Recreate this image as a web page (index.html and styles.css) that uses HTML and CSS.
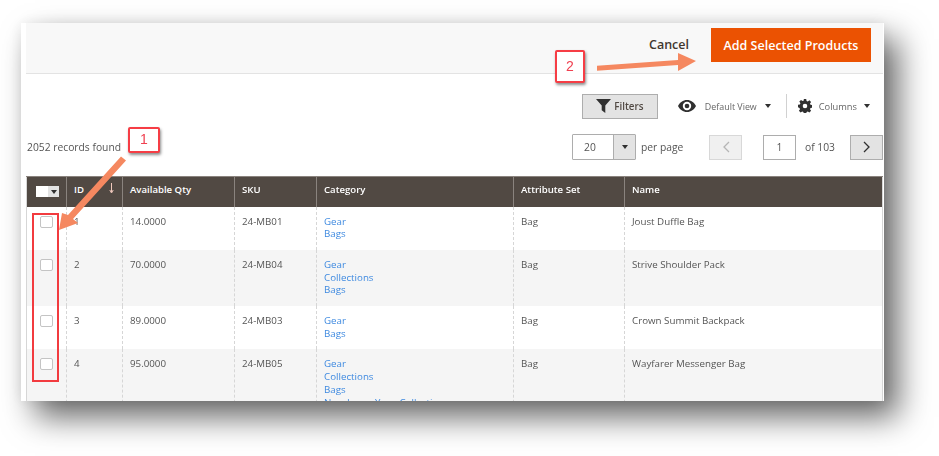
FILE: index.html
```html
<!DOCTYPE html>
<html lang="en">
<head>
    <meta charset="UTF-8">
    <title>Add Products</title>
    <link rel="stylesheet" href="styles.css">
</head>
<body>
<div class="stage">
    <div class="shot">
        <div class="page-header">
            <a class="cancel">Cancel</a>
            <button class="primary">Add Selected Products</button>
        </div>

        <div class="toolbar">
            <button class="filters">
                <svg width="15" height="14" viewBox="0 0 15 14"><path d="M0 0h15L9.300 6.500V14L5.700 11.200V6.500z" fill="#303030"/></svg>
                Filters
            </button>
            <div class="view">
                <svg width="18" height="12" viewBox="0 0 18 12"><path d="M9 0C5 0 1.800 2.400 0 6c1.800 3.600 5 6 9 6s7.200-2.400 9-6c-1.800-3.600-5-6-9-6zm0 1.800a4.200 4.200 0 1 1 0 8.400 4.200 4.200 0 0 1 0-8.400z" fill="#303030"/><circle cx="9" cy="6" r="2.300" fill="#303030"/></svg>
                <span>Default View</span>
                <i class="caret"></i>
            </div>
            <div class="columns">
                <svg width="14" height="14" viewBox="0 0 14 14"><path fill-rule="evenodd" fill="#303030" d="M5.800 0h2.400l.4 1.900 1.200.5 1.600-1.100 1.700 1.700-1.100 1.600.5 1.200 1.900.4v2.400l-1.900.4-.5 1.200 1.100 1.600-1.700 1.700-1.600-1.100-1.200.5-.4 1.900H5.800l-.4-1.900-1.200-.5-1.600 1.100-1.700-1.700 1.100-1.600-.5-1.200L0 8.200V5.800l1.900-.4.5-1.200L1.300 2.600 3 .9l1.600 1.100 1.200-.5zM7 4.700a2.300 2.300 0 1 0 0 4.600 2.300 2.300 0 0 0 0-4.600z"/></svg>
                <span>Columns</span>
                <i class="caret"></i>
            </div>
        </div>

        <div class="pager-row">
            <div class="records">2052 records found</div>
            <div class="pager">
                <div class="per-page-select">
                    <span class="value">20</span>
                    <span class="toggle"><i class="caret"></i></span>
                </div>
                <span class="per-page">per page</span>
                <button class="page-btn prev">
                    <svg width="8" height="12" viewBox="0 0 8 12"><path d="M7 1L2 6l5 5" fill="none" stroke="#b5b5b5" stroke-width="1.300"/></svg>
                </button>
                <span class="page-input">1</span>
                <span class="of-pages">of 103</span>
                <button class="page-btn next">
                    <svg width="8" height="12" viewBox="0 0 8 12"><path d="M1 1l5 5-5 5" fill="none" stroke="#303030" stroke-width="1.300"/></svg>
                </button>
            </div>
        </div>

        <table class="grid">
            <colgroup>
                <col class="c-check"><col class="c-id"><col class="c-qty"><col class="c-sku"><col class="c-cat"><col class="c-set"><col>
            </colgroup>
            <thead>
                <tr>
                    <th class="mass"><span class="mass-box"></span><span class="mass-toggle"><i class="caret small"></i></span></th>
                    <th class="sorted">ID
                        <svg class="sort" width="5" height="11" viewBox="0 0 5 11"><path d="M2.500 0v9M.8 7l1.700 3 1.700-3" fill="none" stroke="#f0c8bc" stroke-width="1"/></svg>
                    </th>
                    <th>Available Qty</th>
                    <th>SKU</th>
                    <th>Category</th>
                    <th>Attribute Set</th>
                    <th>Name</th>
                </tr>
            </thead>
            <tbody>
                <tr>
                    <td><span class="check"></span></td>
                    <td>1</td><td>14.0000</td><td>24-MB01</td>
                    <td><a>Gear</a><a>Bags</a></td>
                    <td>Bag</td><td>Joust Duffle Bag</td>
                </tr>
                <tr>
                    <td><span class="check"></span></td>
                    <td>2</td><td>70.0000</td><td>24-MB04</td>
                    <td><a>Gear</a><a>Collections</a><a>Bags</a></td>
                    <td>Bag</td><td>Strive Shoulder Pack</td>
                </tr>
                <tr>
                    <td><span class="check"></span></td>
                    <td>3</td><td>89.0000</td><td>24-MB03</td>
                    <td><a>Gear</a><a>Bags</a></td>
                    <td>Bag</td><td>Crown Summit Backpack</td>
                </tr>
                <tr>
                    <td><span class="check"></span></td>
                    <td>4</td><td>95.0000</td><td>24-MB05</td>
                    <td><a>Gear</a><a>Collections</a><a>Bags</a><a>New Luma Yoga Collection</a></td>
                    <td>Bag</td><td>Wayfarer Messenger Bag</td>
                </tr>
            </tbody>
        </table>
    </div>

    <!-- annotations drawn over the screenshot -->
    <div class="mark-rows"></div>
    <svg class="arrows" width="939" height="456" viewBox="0 0 939 456">
        <path d="M121 156.500L126 160.500 73 219 78 223 59 230 62 213 68 215z" fill="#f58860"/>
        <path d="M597 65.800L678 60V53L696 61 678 71V65L597 70.800z" fill="#f58860"/>
    </svg>
    <div class="callout one">1</div>
    <div class="callout two">2</div>
</div>
</body>
</html>
```

FILE: styles.css
```css
html, body {
    margin: 0;
    padding: 0;
    background-color: #fff;
}
.stage {
    position: relative;
    width: 939px;
    height: 456px;
    overflow: hidden;
    font-family: "Open Sans", sans-serif;
    font-size: 9.750px;
    color: #4f4f4f;
    filter: blur(0.4px);
}
.shot {
    box-sizing: border-box;
    width: 863px;
    height: 378px;
    margin: 23px 0 0 21px;
    padding: 0 1px 0 5px;
    overflow: hidden;
    background-color: #fff;
    box-shadow: 14px 16px 30px rgba(0, 0, 0, 0.6), 0 0 14px rgba(0, 0, 0, 0.08);
}
button {
    font-family: inherit;
    cursor: pointer;
}
.caret {
    display: inline-block;
    width: 0;
    height: 0;
    border-left: 3.500px solid transparent;
    border-right: 3.500px solid transparent;
    border-top: 4px solid #303030;
}
.caret.small {
    border-left-width: 3px;
    border-right-width: 3px;
    border-top-width: 4px;
}

/* header */
.page-header {
    display: flex;
    justify-content: flex-end;
    align-items: flex-start;
    height: 50px;
    padding-right: 12px;
    background-color: #f8f8f8;
    border-bottom: 1px solid #e3e3e3;
}
.cancel {
    margin: 14px 22px 0 0;
    font-size: 12.500px;
    font-weight: 600;
    line-height: 16px;
    color: #41362f;
}
.primary {
    width: 160px;
    height: 34px;
    margin-top: 5px;
    padding: 0;
    border: none;
    background-color: #eb5202;
    color: #fff;
    font-size: 12.500px;
    font-weight: 600;
}

/* filters and view row */
.toolbar {
    display: flex;
    justify-content: flex-end;
    align-items: center;
    height: 24px;
    margin-top: 20px;
    padding-right: 13px;
}
.filters {
    display: flex;
    align-items: center;
    justify-content: center;
    gap: 3px;
    box-sizing: border-box;
    width: 76px;
    height: 25px;
    padding: 0;
    background-color: #e3e3e3;
    border: 1px solid #adadad;
    color: #514943;
    font-size: 9.800px;
    font-weight: 600;
}
.view {
    display: flex;
    align-items: center;
    height: 24px;
    margin-left: 20px;
    padding-right: 15px;
    border-right: 1px solid #d1d1d1;
    color: #666;
    font-size: 8.900px;
}
.view span {
    margin: 0 8px 0 9px;
}
.columns {
    display: flex;
    align-items: center;
    margin-left: 11px;
    color: #666;
    font-size: 9.300px;
}
.columns span {
    margin: 0 7px 0 7px;
}

/* pager row */
.pager-row {
    display: flex;
    justify-content: space-between;
    align-items: center;
    height: 26px;
    margin-top: 16px;
}
.records {
    padding-left: 1px;
    font-size: 10.300px;
    color: #555;
}
.pager {
    display: flex;
    align-items: center;
    color: #555;
    font-size: 10.300px;
}
.per-page-select {
    display: flex;
    box-sizing: border-box;
    width: 64px;
    height: 26px;
    background-color: #fff;
    border: 1px solid #adadad;
    border-radius: 1px;
}
.value {
    width: 40px;
    padding-left: 11px;
    box-sizing: border-box;
    line-height: 24px;
}
.toggle {
    display: flex;
    align-items: center;
    justify-content: center;
    flex: 1;
    background-color: #e3e3e3;
    border-left: 1px solid #adadad;
}
.per-page {
    width: 68px;
    margin-left: 5px;
}
.page-btn {
    display: flex;
    align-items: center;
    justify-content: center;
    box-sizing: border-box;
    width: 33px;
    height: 25px;
    padding: 0;
    background-color: #e3e3e3;
    border: 1px solid #adadad;
}
.page-btn.prev {
    background-color: #f0f0f0;
    border-color: #d8d8d8;
}
.page-input {
    box-sizing: border-box;
    width: 33px;
    height: 25px;
    margin-left: 21px;
    border: 1px solid #adadad;
    text-align: center;
    line-height: 23px;
}
.of-pages {
    width: 45px;
    margin-left: 9px;
}

/* grid */
.grid {
    width: 857px;
    margin-top: 16px;
    border-collapse: collapse;
    table-layout: fixed;
    border-left: 1px solid #d6d6d6;
    border-right: 1px solid #d6d6d6;
}
.c-check { width: 40px; }
.c-id { width: 56px; }
.c-qty { width: 112px; }
.c-sku { width: 82px; }
.c-cat { width: 197px; }
.c-set { width: 111px; }
.grid th {
    position: relative;
    box-sizing: border-box;
    height: 30px;
    padding: 0 7px 4px;
    background-color: #514943;
    border-left: 1px solid #8a837e;
    border-top: 1px solid #8a837e;
    color: #fff;
    font-size: 9.600px;
    font-weight: 600;
    text-align: left;
}
.grid th:first-child {
    border-left: none;
}
.grid th.mass {
    padding: 0 0 0 9px;
    font-size: 0;
}
.mass-box {
    display: inline-block;
    vertical-align: middle;
    width: 12px;
    height: 11px;
    background-color: #fff;
}
.mass-toggle {
    display: inline-flex;
    align-items: center;
    justify-content: center;
    vertical-align: middle;
    width: 11px;
    height: 11px;
    background-color: #e3e3e3;
}
.sort {
    position: absolute;
    right: 8px;
    top: 6px;
}
.grid td {
    padding: 9px 7px 9px;
    vertical-align: top;
    border-left: 1px dashed #d6d6d6;
    line-height: 12.700px;
    color: #555;
}
.grid td:first-child {
    border-left: none;
    text-align: center;
    padding-left: 0;
    padding-right: 0;
}
.grid tbody tr:nth-child(even) td {
    background-color: #f5f5f5;
}
.grid a {
    display: block;
    color: #3f8ae0;
    white-space: nowrap;
}
.check {
    display: block;
    box-sizing: border-box;
    width: 13px;
    height: 12px;
    margin: 0 auto;
    background-color: #fff;
    border: 1px solid #c4c4c4;
    border-radius: 2px;
}

/* annotations */
.mark-rows {
    position: absolute;
    left: 32px;
    top: 213px;
    box-sizing: border-box;
    width: 27px;
    height: 169px;
    border: 2px solid #f23b3f;
}
.arrows {
    position: absolute;
    left: 0;
    top: 0;
}
.callout {
    position: absolute;
    box-sizing: border-box;
    background-color: #fff;
    border: 2px solid #f63d45;
    border-radius: 2px;
    box-shadow: 1px 2px 3px rgba(0, 0, 0, 0.45);
    color: #f04050;
    font-family: "Liberation Sans", Arial, sans-serif;
    font-size: 14px;
    text-align: center;
}
.callout.one {
    left: 128px;
    top: 127px;
    width: 32px;
    height: 26px;
    line-height: 21px;
}
.callout.two {
    left: 555px;
    top: 50px;
    width: 30px;
    height: 33px;
    line-height: 29px;
}
```
